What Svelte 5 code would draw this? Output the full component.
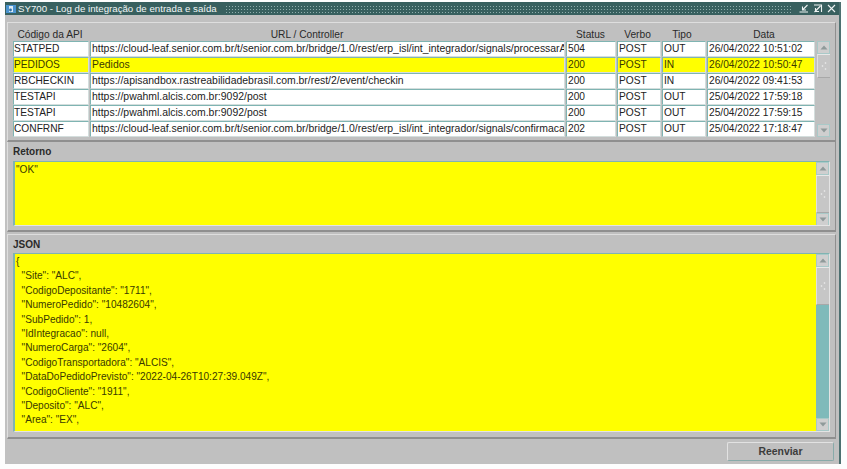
<script>
  const rows = [
    { api: 'STATPED', url: 'https://cloud-leaf.senior.com.br/t/senior.com.br/bridge/1.0/rest/erp_isl/int_integrador/signals/processarA', status: '504', verb: 'POST', tipo: 'OUT', date: '26/04/2022 10:51:02' },
    { api: 'PEDIDOS', url: 'Pedidos', status: '200', verb: 'POST', tipo: 'IN', date: '26/04/2022 10:50:47', active: true },
    { api: 'RBCHECKIN', url: 'https://apisandbox.rastreabilidadebrasil.com.br/rest/2/event/checkin', status: '200', verb: 'POST', tipo: 'IN', date: '26/04/2022 09:41:53' },
    { api: 'TESTAPI', url: 'https://pwahml.alcis.com.br:9092/post', status: '200', verb: 'POST', tipo: 'OUT', date: '25/04/2022 17:59:18' },
    { api: 'TESTAPI', url: 'https://pwahml.alcis.com.br:9092/post', status: '200', verb: 'POST', tipo: 'OUT', date: '25/04/2022 17:59:15' },
    { api: 'CONFRNF', url: 'https://cloud-leaf.senior.com.br/t/senior.com.br/bridge/1.0/rest/erp_isl/int_integrador/signals/confirmaca', status: '202', verb: 'POST', tipo: 'OUT', date: '25/04/2022 17:18:47' }
  ]

  const json = `{
  "Site": "ALC",
  "CodigoDepositante": "1711",
  "NumeroPedido": "10482604",
  "SubPedido": 1,
  "IdIntegracao": null,
  "NumeroCarga": "2604",
  "CodigoTransportadora": "ALCIS",
  "DataDoPedidoPrevisto": "2022-04-26T10:27:39.049Z",
  "CodigoCliente": "1911",
  "Deposito": "ALC",
  "Area": "EX",`
</script>

{#snippet scrollbar(thumb, full)}
  <div class="scrollbar" class:full>
    <div class="arrow up"><svg width="8" height="5" viewBox="0 0 8 5"><path d="M4 0.5 L7.5 4.5 H0.5 Z" /></svg></div>
    <div class="thumb" style="height: {thumb}px">
      <svg width="6" height="10" viewBox="0 0 6 10"><circle cx="4.5" cy="2" r="0.8" /><circle cx="1.5" cy="5" r="0.8" /><circle cx="4.5" cy="8" r="0.8" /></svg>
    </div>
    <div class="track"></div>
    <div class="arrow down"><svg width="8" height="5" viewBox="0 0 8 5"><path d="M0.5 0.5 H7.5 L4 4.5 Z" /></svg></div>
  </div>
{/snippet}

<div class="window">
  <div class="titlebar">
    <svg class="appicon" width="10" height="8" viewBox="0 0 10 8"><rect width="10" height="8" fill="#4a93cf" /><path d="M3 1 H7 V7 H3 Z" fill="#dcebf6" /><circle cx="4.5" cy="5" r="1.4" fill="#2e6fa6" /></svg>
    <span class="title">SY700 - Log de integração de entrada e saída</span>
    <div class="dots"></div>
    <div class="controls">
      <svg width="10" height="9" viewBox="0 0 10 9"><path d="M8.5 1 L3.5 6 M3.5 2.5 V6 H7 M0.5 8 H9" /></svg>
      <svg width="10" height="9" viewBox="0 0 10 9"><path d="M1 1 H8.5 V8 M7.5 2 L1.5 8 M2.5 4 V7.5 H6" /></svg>
      <svg width="9" height="9" viewBox="0 0 9 9"><path d="M1 1 L8 8 M8 1 L1 8" /></svg>
    </div>
  </div>

  <div class="body">
    <section class="panel grid-panel">
      <div class="heads">
        <span class="h-api">Código da API</span>
        <span class="h-url">URL / Controller</span>
        <span class="h-status">Status</span>
        <span class="h-verb">Verbo</span>
        <span class="h-tipo">Tipo</span>
        <span class="h-date">Data</span>
      </div>
      <div class="grid-wrap">
        <div class="rows">
          {#each rows as row}
            <div class="row" class:active={row.active}>
              <div class="cell first">{row.api}</div>
              <div class="cell url">{row.url}</div>
              <div class="cell">{row.status}</div>
              <div class="cell">{row.verb}</div>
              <div class="cell">{row.tipo}</div>
              <div class="cell">{row.date}</div>
            </div>
          {/each}
        </div>
        {@render scrollbar(24)}
      </div>
    </section>

    <section class="panel retorno">
      <h3>Retorno</h3>
      <div class="textbox">
        <pre>"OK"</pre>
        {@render scrollbar(38)}
      </div>
    </section>

    <section class="panel json">
      <h3>JSON</h3>
      <div class="textbox">
        <pre>{json}</pre>
        {@render scrollbar(38, true)}
      </div>
    </section>

    <div class="footer">
      <button>Reenviar</button>
    </div>
  </div>
</div>

<style>
  :global(body) {
    background: #fdfdfd;
  }
  .window {
    width: 836px;
    height: 462px;
    margin: 2px 0 0 5px;
    box-sizing: border-box;
    display: flex;
    flex-direction: column;
    border-right: 2px solid #4c7070;
    font-family: "Liberation Sans", Arial, sans-serif;
    font-size: 10px;
    color: #2a2a2a;
    background: #c0c0c0;
  }
  .titlebar {
    height: 13px;
    flex: none;
    display: flex;
    align-items: center;
    gap: 2px;
    padding: 0 3px 0 1px;
    background: #38605f;
    color: #f2f6f6;
  }
  .appicon { flex: none; }
  .title {
    font-size: 9.7px;
    white-space: nowrap;
    margin-right: 6px;
  }
  .dots {
    flex: 1;
    height: 8px;
    background-image: radial-gradient(circle, #8fadac 0.8px, transparent 0.9px);
    background-size: 3px 3px;
    margin-right: 5px;
  }
  .controls {
    display: flex;
    gap: 4px;
  }
  .controls svg {
    fill: none;
    stroke: #eef3f3;
    stroke-width: 1.1;
  }
  .body {
    flex: 1;
    display: flex;
    flex-direction: column;
    background: #c0c0c0;
    padding: 7px 0 0 2px;
    min-height: 0;
  }
  .panel {
    box-sizing: border-box;
    margin-right: 3px;
    border-top: 1px solid #dedede;
    border-left: 1px solid #dedede;
    border-right: 1px solid #8f8f8f;
    border-bottom: 2px solid #8f8f8f;
    padding: 0 6px 0 5px;
  }
  .grid-panel {
    height: 120px;
  }
  .heads, .row {
    display: grid;
    grid-template-columns: 77px 476px 51px 45px 45px 109px;
    width: 803px;
  }
  .heads {
    height: 18px;
    align-items: end;
    text-align: center;
    font-size: 10.2px;
    line-height: 12px;
    box-sizing: border-box;
  }
  .h-api { padding-right: 3px; }
  .h-url { padding-right: 42px; }
  .h-status { padding-right: 2px; }
  .h-verb { padding-right: 4px; }
  .h-tipo { padding-right: 5px; }
  .h-date { padding-left: 5px; }
  .grid-wrap {
    display: flex;
    gap: 1px;
  }
  .rows {
    width: 803px;
    flex: none;
  }
  .row {
    height: 16px;
  }
  .cell {
    box-sizing: border-box;
    height: 16px;
    margin-right: 1px;
    padding: 0 0 0 1px;
    background: #fff;
    border: 1px solid #d4dedd;
    border-top: 1px solid #7fb4b2;
    border-left: 1px solid #7fb4b2;
    font-size: 10.2px;
    line-height: 13px;
    white-space: nowrap;
    overflow: hidden;
    color: #222;
  }
  .cell.first { padding-left: 0; }
  .cell.url { font-size: 10.45px; }
  .row.active .cell {
    background: #ffff00;
    color: #3a3a00;
  }
  .scrollbar {
    width: 13px;
    flex: none;
    display: flex;
    flex-direction: column;
    background: #c0c0c0;
    box-sizing: border-box;
  }
  .scrollbar.full .track {
    background: #7fbaba;
  }
  .arrow {
    height: 13px;
    flex: none;
    display: flex;
    align-items: center;
    justify-content: center;
    box-sizing: border-box;
    background: #cfcfcf;
    border: 1px solid #a9c9c8;
  }
  .arrow svg { fill: #8f9a9a; }
  .thumb {
    flex: none;
    display: flex;
    align-items: center;
    justify-content: center;
    box-sizing: border-box;
    background: #c6c6c6;
    border-top: 1px solid #e8e8e8;
    border-left: 1px solid #e0e0e0;
    border-bottom: 1px solid #a8a8a8;
  }
  .thumb svg { fill: #f0f0f0; }
  .track { flex: 1; }
  h3 {
    margin: 0;
    font-size: 10px;
    line-height: 12px;
    font-weight: bold;
    color: #2a2a2a;
    height: 18px;
    padding-top: 3px;
    box-sizing: border-box;
  }
  .retorno {
    height: 90px;
    border-top: none;
    padding-top: 1px;
  }
  .json {
    height: 205px;
    margin-top: 2px;
  }
  .json h3 { padding-top: 4px; }
  .textbox {
    display: flex;
    box-sizing: border-box;
    width: 817px;
    border-top: 1px solid #7fb4b2;
    border-left: 2px solid #7fb4b2;
    border-bottom: 1px solid #e4e4e4;
    border-right: 1px solid #e4e4e4;
    background: #ffff00;
    overflow: hidden;
  }
  .retorno .textbox { height: 65px; }
  .json .textbox { height: 179px; }
  pre {
    flex: 1;
    margin: 0;
    padding: 1px 0 0 1px;
    font-family: "Liberation Sans", Arial, sans-serif;
    font-size: 10.1px;
    line-height: 14.4px;
    color: #3a3a00;
    overflow: hidden;
  }
  .footer {
    flex: 1;
    display: flex;
    justify-content: flex-end;
    align-items: flex-start;
    padding: 3px 5px 0 0;
  }
  button {
    width: 107px;
    height: 19px;
    padding: 0;
    background: #c0c0c0;
    border: 1px solid;
    border-color: #e2e2e2 #88aaa9 #88aaa9 #e2e2e2;
    border-radius: 2px;
    font-family: "Liberation Sans", Arial, sans-serif;
    font-size: 10.4px;
    font-weight: bold;
    color: #3c3c3c;
  }
</style>
